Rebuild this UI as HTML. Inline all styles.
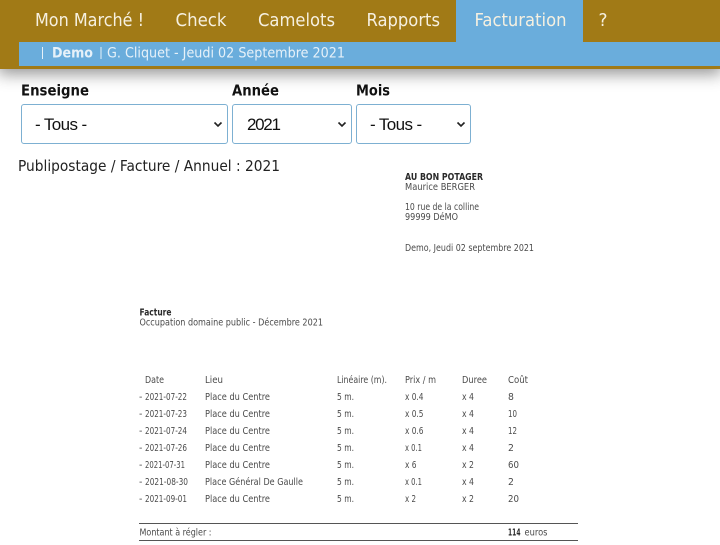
<!DOCTYPE html>
<html lang="fr">
<head>
<meta charset="utf-8">
<title>Facturation</title>
<style>
html,body{margin:0;padding:0;background:#fff;}
body{width:720px;height:545px;overflow:hidden;position:relative;font-family:"Liberation Sans",sans-serif;}
.hdr{position:absolute;left:0;top:0;width:720px;height:69px;background:#a17a16;box-shadow:0 3px 15px 2px rgba(0,0,0,.42);}
.tab{position:absolute;left:456px;top:0;width:127px;height:42px;background:#6aaddc;}
.bar{position:absolute;left:19px;top:42px;width:701px;height:24px;background:#6aaddc;}
select{position:absolute;top:104px;height:40px;box-sizing:border-box;background:#fff;border:1px solid #7db0d2;border-radius:3px;font:17px "Liberation Sans",sans-serif;letter-spacing:-.6px;color:#111;padding:0 0 0 13px;margin:0;appearance:none;-webkit-appearance:none;}
svg{position:absolute;left:0;top:0;}
text{font-family:"DejaVu Sans",sans-serif;}
.n{font-size:17.500px;fill:#f6f0e0;}
.b{font-size:14px;fill:#e6f1f9;}
.l{font-size:15px;font-weight:bold;fill:#111;}
.s{font-size:9.300px;fill:#4a4a4a;}
.h{font-size:9.300px;fill:#2a2a2a;font-weight:bold;}
.c{fill:none;stroke:#222;stroke-width:1.600;}
</style>
</head>
<body>
<div class="hdr"></div>
<div class="tab"></div>
<div class="bar"></div>
<select style="left:21px;width:207px"><option>- Tous -</option></select>
<select style="left:232px;width:120px;padding-left:14px;letter-spacing:-1.300px"><option>2021</option></select>
<select style="left:356px;width:115px"><option>- Tous -</option></select>
<svg width="720" height="545" viewBox="0 0 720 545" xmlns="http://www.w3.org/2000/svg">
<path class="c" d="M214.500 122.500l3.500 3.500 3.500-3.500"/>
<path class="c" d="M338.500 122.500l3.500 3.500 3.500-3.500"/>
<path class="c" d="M457.500 122.500l3.500 3.500 3.500-3.500"/>
<g class="nav">
<text class="n" x="35" y="26" textLength="109" lengthAdjust="spacingAndGlyphs">Mon Marché !</text>
<text class="n" x="175.500" y="26" textLength="51" lengthAdjust="spacingAndGlyphs">Check</text>
<text class="n" x="258" y="26" textLength="77" lengthAdjust="spacingAndGlyphs">Camelots</text>
<text class="n" x="366.500" y="26" textLength="73.500" lengthAdjust="spacingAndGlyphs">Rapports</text>
<text class="n" x="474.500" y="26" textLength="92" lengthAdjust="spacingAndGlyphs">Facturation</text>
<text class="n" x="598.500" y="26" textLength="9" lengthAdjust="spacingAndGlyphs">?</text>
</g>
<rect x="42" y="47" width="1" height="12" fill="#e6f1f9"/>
<text class="b" x="52" y="57.500" font-weight="bold" textLength="41" lengthAdjust="spacingAndGlyphs">Demo</text>
<rect x="100.500" y="47" width="1" height="12" fill="#e6f1f9"/>
<text class="b" x="107" y="57.500" textLength="238" lengthAdjust="spacingAndGlyphs">G. Cliquet - Jeudi 02 Septembre 2021</text>
<text class="l" x="21" y="95.500" textLength="68" lengthAdjust="spacingAndGlyphs">Enseigne</text>
<text class="l" x="232" y="95.500" textLength="47" lengthAdjust="spacingAndGlyphs">Année</text>
<text class="l" x="356" y="95.500" textLength="34" lengthAdjust="spacingAndGlyphs">Mois</text>
<text x="18" y="171" font-size="15.500" fill="#222" textLength="262" lengthAdjust="spacingAndGlyphs">Publipostage / Facture / Annuel : 2021</text>

<text class="h" x="405" y="180" textLength="78" lengthAdjust="spacingAndGlyphs">AU BON POTAGER</text>
<text class="s" x="405" y="190" textLength="70" lengthAdjust="spacingAndGlyphs">Maurice BERGER</text>
<text class="s" x="405" y="210" textLength="74" lengthAdjust="spacingAndGlyphs">10 rue de la colline</text>
<text class="s" x="405" y="220" textLength="53" lengthAdjust="spacingAndGlyphs">99999 DéMO</text>
<text class="s" x="405" y="251" textLength="129" lengthAdjust="spacingAndGlyphs">Demo, Jeudi 02 septembre 2021</text>

<text class="h" x="139.500" y="315.500" textLength="32" lengthAdjust="spacingAndGlyphs">Facture</text>
<text class="s" x="139.500" y="325.500" textLength="183.500" lengthAdjust="spacingAndGlyphs">Occupation domaine public - Décembre 2021</text>

<text class="s" x="145" y="383" textLength="19" lengthAdjust="spacingAndGlyphs">Date</text>
<text class="s" x="205" y="383" textLength="18" lengthAdjust="spacingAndGlyphs">Lieu</text>
<text class="s" x="337" y="383" textLength="50" lengthAdjust="spacingAndGlyphs">Linéaire (m).</text>
<text class="s" x="405" y="383" textLength="31" lengthAdjust="spacingAndGlyphs">Prix / m</text>
<text class="s" x="462" y="383" textLength="25" lengthAdjust="spacingAndGlyphs">Duree</text>
<text class="s" x="508" y="383" textLength="20" lengthAdjust="spacingAndGlyphs">Coût</text>

<text class="s" x="139" y="400">-</text><text class="s" x="145" y="400" textLength="42" lengthAdjust="spacingAndGlyphs">2021-07-22</text><text class="s" x="205" y="400" textLength="65" lengthAdjust="spacingAndGlyphs">Place du Centre</text><text class="s" x="337" y="400" textLength="17" lengthAdjust="spacingAndGlyphs">5 m.</text><text class="s" x="405" y="400" textLength="18.500" lengthAdjust="spacingAndGlyphs">x 0.4</text><text class="s" x="462" y="400" textLength="12" lengthAdjust="spacingAndGlyphs">x 4</text><text class="s" x="508" y="400">8</text>

<text class="s" x="139" y="417">-</text><text class="s" x="145" y="417" textLength="42" lengthAdjust="spacingAndGlyphs">2021-07-23</text><text class="s" x="205" y="417" textLength="65" lengthAdjust="spacingAndGlyphs">Place du Centre</text><text class="s" x="337" y="417" textLength="17" lengthAdjust="spacingAndGlyphs">5 m.</text><text class="s" x="405" y="417" textLength="18.500" lengthAdjust="spacingAndGlyphs">x 0.5</text><text class="s" x="462" y="417" textLength="12" lengthAdjust="spacingAndGlyphs">x 4</text><text class="s" x="508" y="417" textLength="9" lengthAdjust="spacingAndGlyphs">10</text>

<text class="s" x="139" y="434">-</text><text class="s" x="145" y="434" textLength="42" lengthAdjust="spacingAndGlyphs">2021-07-24</text><text class="s" x="205" y="434" textLength="65" lengthAdjust="spacingAndGlyphs">Place du Centre</text><text class="s" x="337" y="434" textLength="17" lengthAdjust="spacingAndGlyphs">5 m.</text><text class="s" x="405" y="434" textLength="18.500" lengthAdjust="spacingAndGlyphs">x 0.6</text><text class="s" x="462" y="434" textLength="12" lengthAdjust="spacingAndGlyphs">x 4</text><text class="s" x="508" y="434" textLength="9" lengthAdjust="spacingAndGlyphs">12</text>

<text class="s" x="139" y="451">-</text><text class="s" x="145" y="451" textLength="42" lengthAdjust="spacingAndGlyphs">2021-07-26</text><text class="s" x="205" y="451" textLength="65" lengthAdjust="spacingAndGlyphs">Place du Centre</text><text class="s" x="337" y="451" textLength="17" lengthAdjust="spacingAndGlyphs">5 m.</text><text class="s" x="405" y="451" textLength="17" lengthAdjust="spacingAndGlyphs">x 0.1</text><text class="s" x="462" y="451" textLength="12" lengthAdjust="spacingAndGlyphs">x 4</text><text class="s" x="508" y="451">2</text>

<text class="s" x="139" y="468">-</text><text class="s" x="145" y="468" textLength="40" lengthAdjust="spacingAndGlyphs">2021-07-31</text><text class="s" x="205" y="468" textLength="65" lengthAdjust="spacingAndGlyphs">Place du Centre</text><text class="s" x="337" y="468" textLength="17" lengthAdjust="spacingAndGlyphs">5 m.</text><text class="s" x="405" y="468" textLength="11.500" lengthAdjust="spacingAndGlyphs">x 6</text><text class="s" x="462" y="468" textLength="12" lengthAdjust="spacingAndGlyphs">x 2</text><text class="s" x="508" y="468" textLength="11" lengthAdjust="spacingAndGlyphs">60</text>

<text class="s" x="139" y="485">-</text><text class="s" x="145" y="485" textLength="43" lengthAdjust="spacingAndGlyphs">2021-08-30</text><text class="s" x="205" y="485" textLength="98" lengthAdjust="spacingAndGlyphs">Place Général De Gaulle</text><text class="s" x="337" y="485" textLength="17" lengthAdjust="spacingAndGlyphs">5 m.</text><text class="s" x="405" y="485" textLength="17" lengthAdjust="spacingAndGlyphs">x 0.1</text><text class="s" x="462" y="485" textLength="12" lengthAdjust="spacingAndGlyphs">x 4</text><text class="s" x="508" y="485">2</text>

<text class="s" x="139" y="502">-</text><text class="s" x="145" y="502" textLength="42" lengthAdjust="spacingAndGlyphs">2021-09-01</text><text class="s" x="205" y="502" textLength="65" lengthAdjust="spacingAndGlyphs">Place du Centre</text><text class="s" x="337" y="502" textLength="17" lengthAdjust="spacingAndGlyphs">5 m.</text><text class="s" x="405" y="502" textLength="11" lengthAdjust="spacingAndGlyphs">x 2</text><text class="s" x="462" y="502" textLength="12" lengthAdjust="spacingAndGlyphs">x 2</text><text class="s" x="508" y="502" textLength="11" lengthAdjust="spacingAndGlyphs">20</text>

<rect x="139" y="523" width="439" height="1" fill="#555"/>
<text class="s" x="139.500" y="535.500" textLength="72" lengthAdjust="spacingAndGlyphs">Montant à régler :</text>
<text class="h" x="508" y="535.500" textLength="12.500" lengthAdjust="spacingAndGlyphs">114</text>
<text class="s" x="524.500" y="535.500" textLength="23" lengthAdjust="spacingAndGlyphs">euros</text>
<rect x="139" y="540" width="439" height="1" fill="#555"/>
</svg>
</body>
</html>
